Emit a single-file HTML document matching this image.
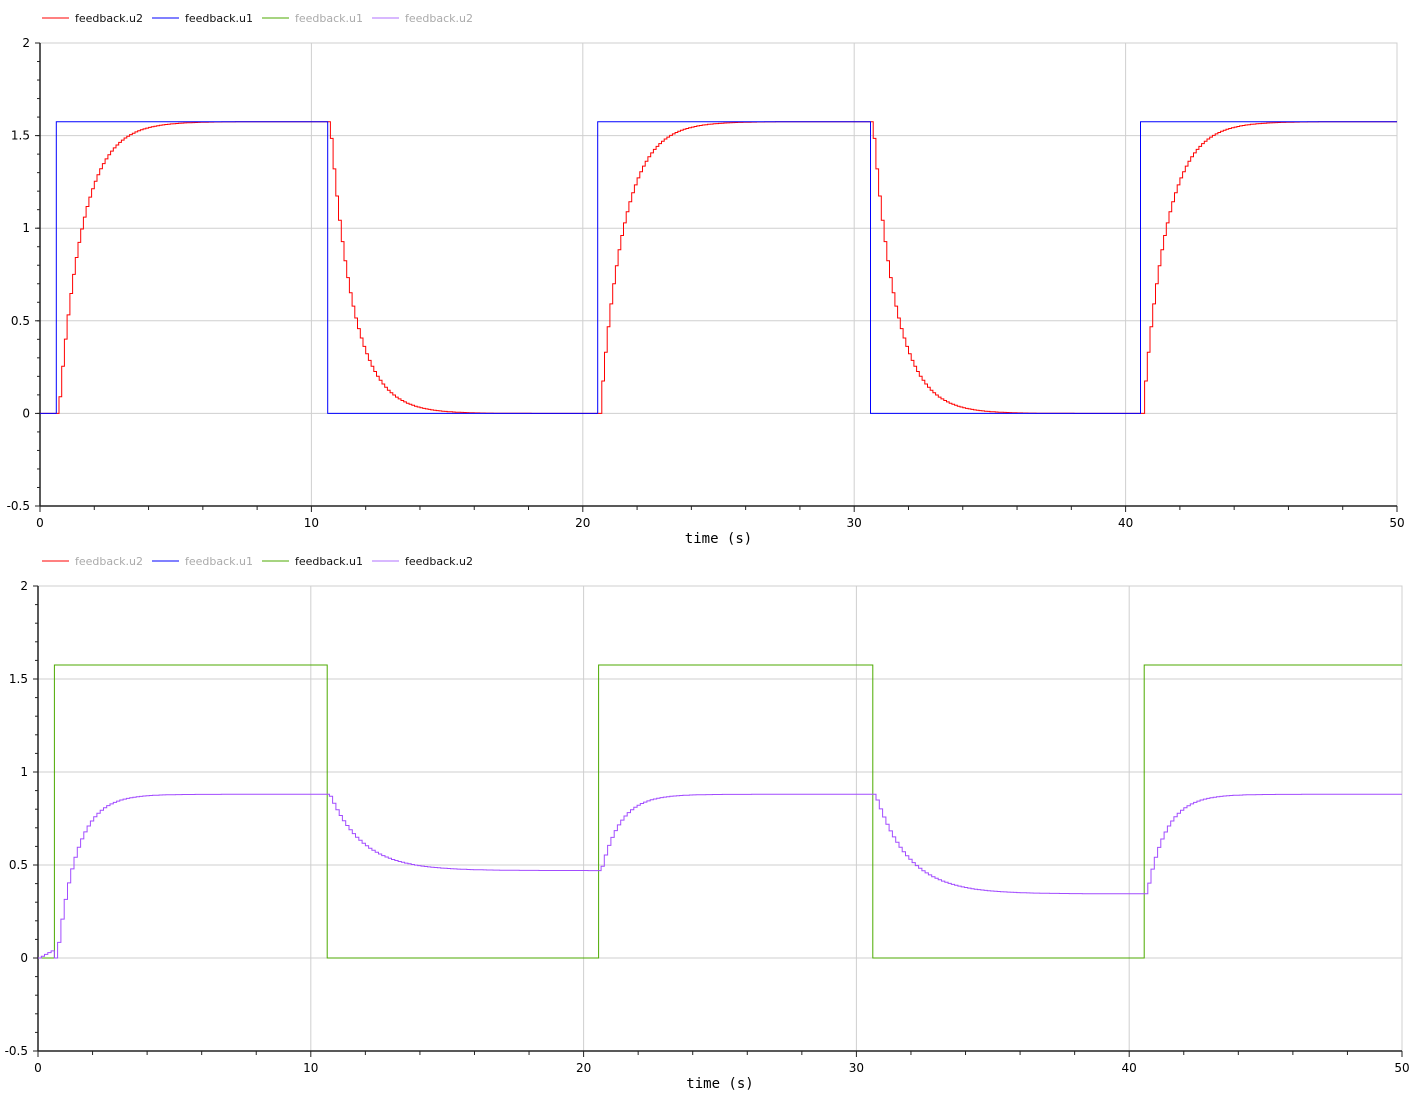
<!DOCTYPE html>
<html><head><meta charset="utf-8">
<style>
html,body{margin:0;padding:0;background:#fff;}
svg{display:block;font-family:"DejaVu Sans","Liberation Sans",sans-serif;}
</style></head>
<body>
<svg id="s" width="1410" height="1094" xmlns="http://www.w3.org/2000/svg"></svg>
<script>
var s=document.getElementById('s');var h='';
function plot(o){
  var X=function(t){return o.x0+t*(o.x1-o.x0)/50;};
  var Y=function(v){return o.yb-(v+0.5)*(o.yb-o.yt)/2.5;};
  h+='<rect x="'+o.x0+'" y="'+o.yt+'" width="'+(o.x1-o.x0)+'" height="'+(o.yb-o.yt)+'" fill="none" stroke="#d0d0d0"/>';
  for(var t=10;t<50;t+=10)h+='<line x1="'+X(t)+'" x2="'+X(t)+'" y1="'+o.yt+'" y2="'+o.yb+'" stroke="#cfcfcf"/>';
  [-0.5,0,0.5,1,1.5,2].forEach(function(v){
    h+='<line x1="'+o.x0+'" x2="'+o.x1+'" y1="'+Y(v)+'" y2="'+Y(v)+'" stroke="#cfcfcf"/>';
    h+='<text x="'+(o.x0-10)+'" y="'+(Y(v)+4)+'" font-size="12" text-anchor="end">'+v+'</text>';
    h+='<line x1="'+(o.x0-5)+'" x2="'+o.x0+'" y1="'+Y(v)+'" y2="'+Y(v)+'" stroke="#222"/>';
  });
  for(var v=-0.5;v<2;v+=0.1){h+='<line x1="'+(o.x0-3)+'" x2="'+o.x0+'" y1="'+Y(v)+'" y2="'+Y(v)+'" stroke="#222"/>';}
  for(var t=0;t<=50;t+=2){var mj=t%10==0;h+='<line x1="'+X(t)+'" x2="'+X(t)+'" y1="'+o.yb+'" y2="'+(o.yb+(mj?6:4))+'" stroke="#222"/>';}
  for(var t=0;t<=50;t+=10)h+='<text x="'+X(t)+'" y="'+(o.yb+21)+'" font-size="12" text-anchor="middle">'+t+'</text>';
  h+='<line x1="'+o.x0+'" x2="'+o.x0+'" y1="'+o.yt+'" y2="'+o.yb+'" stroke="#222" stroke-width="1.5"/>';
  h+='<line x1="'+o.x0+'" x2="'+o.x1+'" y1="'+o.yb+'" y2="'+o.yb+'" stroke="#222" stroke-width="1.5"/>';
  h+='<text x="'+((o.x0+o.x1)/2)+'" y="'+(o.yb+37)+'" font-size="14" text-anchor="middle" font-family="DejaVu Sans Mono,Liberation Mono,monospace">time (s)</text>';
  o.series.forEach(function(sr){
    var d='';sr.pts.forEach(function(p,i){d+=(i?'L':'M')+X(p[0]).toFixed(1)+' '+Y(p[1]).toFixed(1);});
    h+='<path d="'+d+'" fill="none" stroke="'+sr.c+'" stroke-width="1"/>';
  });
}
var edges=[0.6,10.6,20.55,30.6,40.55];
function sq(){var p=[[0,0]];var v=0;edges.forEach(function(e){p.push([e,v]);v=v?0:1.575;p.push([e,v]);});p.push([50,v]);return p;}
function stair(fn,dt){var p=[];var prev=fn(0);p.push([0,prev]);for(var t=dt;t<=50;t+=dt){var v=fn(t);p.push([t,prev]);p.push([t,v]);prev=v;}p.push([50,prev]);return p;}
function lag(t,tau,hi,lo,delay){
  var v=lo[0];
  var segs=[0].concat(edges.map(function(e){return e+delay;}));
  for(var i=0;i<segs.length;i++){
    var st=segs[i],en=i+1<segs.length?segs[i+1]:1e9;
    var up=i%2==1;var target=up?hi:lo[Math.floor(i/2)];var ta=up?tau[0]:tau[1];
    if(t<en){return target+(v-target)*Math.exp(-(t-st)/ta);}
    v=target+(v-target)*Math.exp(-(en-st)/ta);
  }
  return v;
}
var red=stair(function(t){return lag(t,[0.85,0.85],1.575,[0,0,0],0.05);},0.1);
var pur=stair(function(t){if(t<0.6)return t*0.08;return lag(t,[0.7,1.2],0.88,[0,0.47,0.345],0.05);},0.12);
plot({x0:40,x1:1397,yt:43,yb:506,series:[{c:'#ff0000',pts:red},{c:'#0000ff',pts:sq()}]});
plot({x0:38,x1:1402,yt:586,yb:1051,series:[{c:'#4caa00',pts:sq()},{c:'#a24cff',pts:pur}]});
function legend(y,act){
  var items=[['#ff0000','feedback.u2',42],['#0000ff','feedback.u1',152],['#4caa00','feedback.u1',262],['#b070ff','feedback.u2',372]];
  items.forEach(function(it,i){
    h+='<line x1="'+it[2]+'" x2="'+(it[2]+27)+'" y1="'+y+'" y2="'+y+'" stroke="'+it[0]+'"/>';
    h+='<text x="'+(it[2]+33)+'" y="'+(y+4)+'" font-size="11" fill="'+(act[i]?'#111':'#aaa')+'">'+it[1]+'</text>';
  });
}
legend(18,[1,1,0,0]);
legend(561,[0,0,1,1]);
s.innerHTML=h;
</script>
</body></html>
